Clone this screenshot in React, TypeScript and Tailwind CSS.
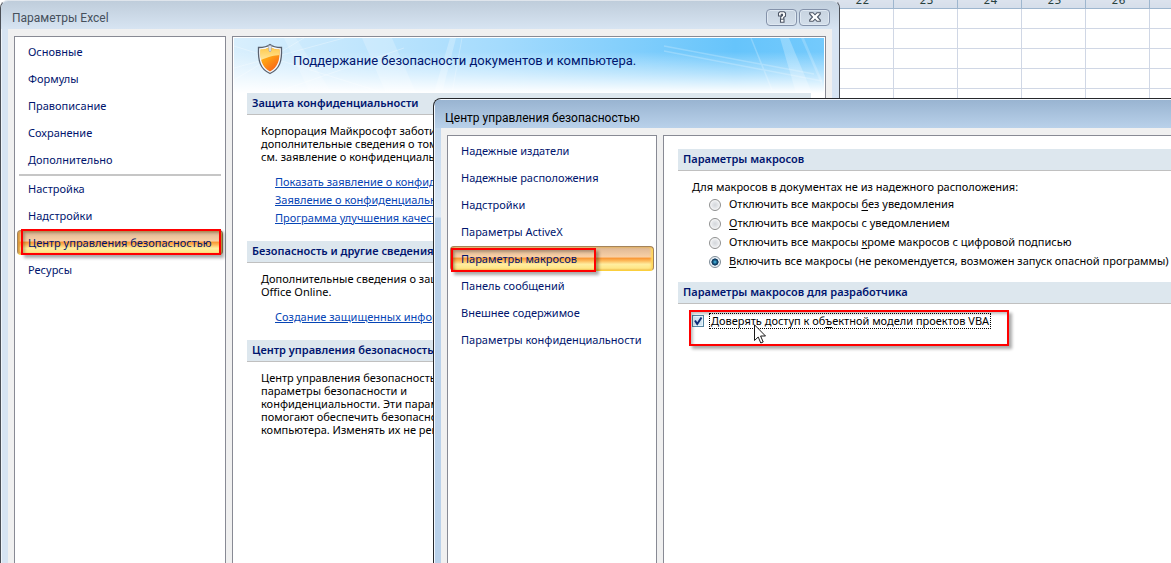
import type { ReactNode } from "react";

const columns = [22, 23, 24, 25, 26, 27];
const sheetRows = [1, 2, 3, 4, 5];

const radioClass =
  "m-0 size-3 shrink-0 appearance-none rounded-full border border-[#8e8f8f] bg-[radial-gradient(circle,#d3d6da_0%,#e6e8eb_45%,#f8f8f8_70%)] checked:border-[#7d8b96] checked:bg-[radial-gradient(circle,#4fc3f0_0%,#15587f_28%,#0b2f55_46%,#dce8f0_54%,#f4f8fb_70%)]";

function Sheet() {
  return (
    <div className="absolute inset-y-0 left-[829px] right-0 overflow-hidden bg-white">
      <table className="-mt-3 w-[385px] table-fixed border-collapse font-['DejaVu_Sans',sans-serif] text-[11px] leading-4 text-[#27413e]">
        <thead>
          <tr className="h-5">
            {columns.map((c) => (
              <th
                key={c}
                className="w-16 border border-[#9eb6ce] bg-[linear-gradient(#e4e9f1,#d5deea)] p-0 pl-0.5 pt-1 text-center font-normal leading-[15px]"
              >
                {c}
              </th>
            ))}
          </tr>
        </thead>
        <tbody>
          {sheetRows.map((r) => (
            <tr key={r} className="h-5">
              {columns.map((c) => (
                <td key={c} className="border border-[#d0d7e5] p-0" />
              ))}
            </tr>
          ))}
        </tbody>
      </table>
    </div>
  );
}

function NavItem({ label, selected, callout }: { label: string; selected?: boolean; callout?: string }) {
  return (
    <li className="relative">
      <button
        type="button"
        className={
          selected
            ? "mb-0.5 block h-[25px] w-full rounded-sm border border-[#a5835a] border-b-[#fbcf3c] bg-[linear-gradient(#dcb695_0%,#f8cfa5_42%,#fa9a3a_50%,#fdb95a_60%,#ffeea0_75%,#ffe37c_100%)] px-[10px] pt-0.5 text-left shadow-[inset_2px_0_2px_#d99a3c,inset_-2px_0_2px_#ffd65a]"
            : "block h-[27px] w-full px-[11px] text-left"
        }
      >
        {label}
      </button>
      {callout && (
        <span
          className={`pointer-events-none absolute border-2 border-[#ff0000] shadow-[3px_3px_3px_#00000055,inset_2px_2px_3px_#00000040] ${callout}`}
        />
      )}
    </li>
  );
}

function Section({ title, children }: { title: string; children: ReactNode }) {
  return (
    <section>
      <h2 className="h-[22px] border-b border-[#c0c0c0] bg-[#dde7ee] px-[5px] text-[11px] font-semibold leading-5 text-[#00156e]">
        {title}
      </h2>
      {children}
    </section>
  );
}

function DocLink({ children }: { children: ReactNode }) {
  return (
    <li>
      <a href="#" className="text-[#0645b5] underline">
        {children}
      </a>
    </li>
  );
}

function Shield() {
  return (
    <svg viewBox="0 0 28 32" className="h-8 w-7 shrink-0" aria-hidden="true">
      <defs>
        <linearGradient id="shield-top" x1="0" y1="0" x2="0" y2="1">
          <stop offset="0" stopColor="#ffc23a" />
          <stop offset="1" stopColor="#ffe9a0" />
        </linearGradient>
        <linearGradient id="shield-base" x1="0" y1="0" x2=".7" y2="1">
          <stop offset="0" stopColor="#ffd21c" />
          <stop offset="0.55" stopColor="#ff9d12" />
          <stop offset="1" stopColor="#f4511e" />
        </linearGradient>
        <clipPath id="shield-clip">
          <path d="M14 4 C11 6 8 6.500 4.500 6.500 C4 17 6 24 14 28.500 C22 24 24 17 23.500 6.500 C20 6.500 17 6 14 4Z" />
        </clipPath>
      </defs>
      <path
        d="M14 1.500 C11 4 7 4.500 2.500 4.500 C2 18 4 26 14 30.500 C24 26 26 18 25.500 4.500 C21 4.500 17 4 14 1.500Z"
        fill="#f5f7fa"
        stroke="#59616f"
        strokeWidth="1.300"
      />
      <g clipPath="url(#shield-clip)">
        <rect width="28" height="32" fill="url(#shield-base)" />
        <path d="M2 2H26V12C20 12 14 13 3 18Z" fill="url(#shield-top)" />
      </g>
      <path d="M12.500 2.500H15.500L15 8L14 9L13 8Z" fill="#e2e6ee" stroke="#8992a3" strokeWidth=".5" />
    </svg>
  );
}

function Banner() {
  return (
    <header className="relative m-px mb-0 h-[55px] overflow-hidden bg-[linear-gradient(90deg,#d9effd_0%,#a4dbfd_45%,#66c4fb_85%,#74cafc_100%)]">
      <svg viewBox="0 0 590 55" preserveAspectRatio="none" className="absolute inset-0 size-full" aria-hidden="true">
        <g fill="#ffffff">
          <path d="M50 0H62L98 55H76Z" opacity=".2" />
          <path d="M128 0H158L182 55H152Z" opacity=".22" />
          <path d="M216 0H222L208 55H200Z" opacity=".25" />
          <path d="M546 0H555L578 55H562Z" opacity=".25" />
          <path d="M567 0H570L588 42V48Z" opacity=".2" />
        </g>
        <g stroke="#ffffff" fill="none">
          <path d="M0 30L110 0M0 8L150 55M40 55L170 10M0 42L70 0" opacity=".3" />
          <path d="M430 8L580 36M430 13L588 43M517 0L538 52" strokeWidth="1.500" opacity=".22" />
          <path d="M228 0L218 55" opacity=".25" />
        </g>
      </svg>
      <div className="absolute inset-0 bg-[linear-gradient(#ffffff00_25%,#ffffff80_65%,#ffffff_100%)]" />
      <div className="relative flex items-center gap-2 pl-[22px] pt-[5px]">
        <Shield />
        <h1 className="pl-px pt-1 font-[Roboto,sans-serif] text-[13px] leading-4 text-[#00156e]">
          Поддержание безопасности документов и компьютера.
        </h1>
      </div>
    </header>
  );
}

const captionButton =
  "flex h-[17px] w-[31px] items-center justify-center rounded-sm border border-[#8492aa] bg-[linear-gradient(#c7d3e0,#d3deea)] shadow-[inset_0_0_0_1px_#dfe8f2]";

function OptionsWindow() {
  return (
    <div className="absolute inset-y-0 left-0 flex w-[840px] flex-col overflow-hidden rounded-t-lg border-x border-t border-x-[#4b4f56] border-t-[#dfe5ec] bg-[#d7e4f2] shadow-[inset_1px_1px_0_#eef4fa]">
      <div className="flex h-7 shrink-0 items-center justify-between bg-[linear-gradient(#bfcddb,#d7e4f2)] pl-[11px] pr-[9px] pt-1">
        <span className="pt-0.5 font-[Roboto,sans-serif] text-xs text-[#46505c]">Параметры Excel</span>
        <div className="flex gap-0.5">
          <button type="button" aria-label="Справка" className={captionButton}>
            <svg viewBox="0 0 10 12" className="h-3 w-2.5" aria-hidden="true">
              <path
                d="M1.500 5V2L3 .7H7L8.500 2V5.200L6.700 6.500V8H7V11.300H3.500V8L3.800 5.800L5.500 4.500V3.400H4.300V5Z"
                fill="#fff"
                stroke="#4d5666"
                strokeWidth="1.100"
              />
              <path d="M3.800 8.200H6.600" stroke="#4d5666" />
            </svg>
          </button>
          <button type="button" aria-label="Закрыть" className={captionButton}>
            <svg viewBox="0 0 12 10" className="h-2.5 w-3" aria-hidden="true">
              <path
                d="M.7 .7H4L6 2.800L8 .7H11.300V2L8.500 5L11.300 8V9.300H8L6 7.200L4 9.300H.7V8L3.500 5L.7 2Z"
                fill="#fff"
                stroke="#4d5666"
                strokeWidth="1.100"
              />
            </svg>
          </button>
        </div>
      </div>
      <div className="mx-[7px] flex grow gap-1.5 bg-[#f0f0f0] px-[6px] pt-[7px]">
        <nav className="w-[212px] shrink-0 border border-b-0 border-[#888a94] bg-white px-0.5 pt-0.5 text-[#00156e]">
          <ul>
            <NavItem label="Основные" />
            <NavItem label="Формулы" />
            <NavItem label="Правописание" />
            <NavItem label="Сохранение" />
            <NavItem label="Дополнительно" />
          </ul>
          <hr className="mx-0.5 border-t-2 border-[#c6c6c6]" />
          <ul>
            <NavItem label="Настройка" />
            <NavItem label="Надстройки" />
            <NavItem label="Центр управления безопасностью" selected callout="-top-px bottom-0 left-1 right-0.5" />
            <NavItem label="Ресурсы" />
          </ul>
        </nav>
        <main className="grow border border-b-0 border-[#888a94] bg-white">
          <Banner />
          <div className="px-[14px]">
            <Section title="Защита конфиденциальности">
              <div className="px-[14px] pb-[14px] pt-[9px] leading-[13px]">
                <p>
                  Корпорация Майкрософт заботи
                  <br />
                  дополнительные сведения о том,
                  <br />
                  см. заявление о конфиденциальн
                </p>
                <ul className="pl-[14px] pt-[10px] leading-[18px]">
                  <DocLink>Показать заявление о конфиде</DocLink>
                  <DocLink>Заявление о конфиденциальн</DocLink>
                  <DocLink>Программа улучшения качеств</DocLink>
                </ul>
              </div>
            </Section>
            <Section title="Безопасность и другие сведения">
              <div className="px-[14px] pb-[14px] pt-[9px] leading-[13px]">
                <p>
                  Дополнительные сведения о защи
                  <br />
                  Office Online.
                </p>
                <ul className="pl-[14px] pt-[10px] leading-[18px]">
                  <DocLink>Создание защищенных информ</DocLink>
                </ul>
              </div>
            </Section>
            <Section title="Центр управления безопасностью">
              <p className="px-[14px] pt-[9px] leading-[13px]">
                Центр управления безопасность
                <br />
                параметры безопасности и
                <br />
                конфиденциальности. Эти парам
                <br />
                помогают обеспечить безопасно
                <br />
                компьютера. Изменять их не рек
              </p>
            </Section>
          </div>
        </main>
      </div>
    </div>
  );
}

function MacroOption({ before, mark, after, checked }: { before: string; mark: string; after: string; checked?: boolean }) {
  return (
    <label className="flex h-[19px] items-center gap-2">
      <input type="radio" name="macros" defaultChecked={checked} className={radioClass} />
      <span className="whitespace-nowrap">
        {before}
        <span className="underline underline-offset-2">{mark}</span>
        {after}
      </span>
    </label>
  );
}

function TrustWindow() {
  return (
    <div className="absolute bottom-0 left-[433px] right-0 top-[98px] flex flex-col overflow-hidden rounded-tl-lg border-l border-t border-[#26282c] bg-[linear-gradient(#b9d1ea_0,#dce8f5_118px,#b9d1ea_119px)] shadow-[inset_1px_1px_0_#f4f9ff]">
      <div className="ml-px mt-px flex h-7 shrink-0 items-center bg-[linear-gradient(#99b4d1,#b9d1ea)] pl-[10px] pt-2 font-[Roboto,sans-serif] text-xs text-black">
        Центр управления безопасностью
      </div>
      <div className="ml-[7px] flex grow gap-1.5 bg-[#f0f0f0] pl-[6px] pt-[7px]">
        <nav className="w-[210px] shrink-0 border border-b-0 border-[#888a94] bg-white px-0.5 pt-0.5 text-[#00156e]">
          <ul>
            <NavItem label="Надежные издатели" />
            <NavItem label="Надежные расположения" />
            <NavItem label="Надстройки" />
            <NavItem label="Параметры ActiveX" />
            <NavItem label="Параметры макросов" selected callout="-bottom-px left-px top-0.5 w-[145px]" />
            <NavItem label="Панель сообщений" />
            <NavItem label="Внешнее содержимое" />
            <NavItem label="Параметры конфиденциальности" />
          </ul>
        </nav>
        <main className="grow overflow-hidden border-l border-t border-[#888a94] bg-white pl-[14px] pt-[13px]">
          <Section title="Параметры макросов">
            <fieldset className="px-[14px] pb-[11px] pt-2">
              <legend className="float-left h-4 leading-[15px]">
                Для макросов в документах не из надежного расположения:
              </legend>
              <div className="clear-both pl-[17px]">
                <MacroOption before="Отключить все макросы " mark="б" after="ез уведомления" />
                <MacroOption before="" mark="О" after="тключить все макросы с уведомлением" />
                <MacroOption before="Отключить все макросы " mark="к" after="роме макросов с цифровой подписью" />
                <MacroOption
                  before=""
                  mark="В"
                  after="ключить все макросы (не рекомендуется, возможен запуск опасной программы)"
                  checked
                />
              </div>
            </fieldset>
          </Section>
          <Section title="Параметры макросов для разработчика">
            <div className="relative flex pl-[14px] pt-[9px]">
              <label className="flex h-4 items-center gap-[5px]">
                <input type="checkbox" defaultChecked className="peer sr-only" />
                <svg viewBox="0 0 12 12" className="size-3 shrink-0" aria-hidden="true">
                  <rect x=".5" y=".5" width="11" height="11" fill="#e5f4fc" stroke="#5586a3" />
                  <rect x="2" y="2" width="8" height="8" fill="#cfe3ef" />
                  <path d="M3 5.500L5.200 9L9.500 2.500" fill="none" stroke="#0f2d78" strokeWidth="2" />
                </svg>
                <span className="whitespace-nowrap border border-dotted border-black px-px leading-[14px]">
                  Доверять доступ к об<span className="underline underline-offset-2">ъ</span>ектной модели проектов VBA
                </span>
              </label>
              <span className="pointer-events-none absolute left-[11px] top-[6px] h-9 w-80 border-2 border-[#ff0000] shadow-[3px_3px_3px_#00000055,inset_2px_2px_3px_#00000040]" />
              <svg viewBox="0 0 12 20" className="absolute left-[76px] top-[20px] h-5 w-3" aria-hidden="true">
                <path
                  d="M.5 .8V16.500L4.200 13L6.800 19L9.200 18L6.600 12H11.500Z"
                  fill="#fff"
                  stroke="#000"
                  strokeWidth=".9"
                />
              </svg>
            </div>
          </Section>
        </main>
      </div>
    </div>
  );
}

export default function App() {
  return (
    <div className="relative h-screen min-h-[480px] overflow-hidden bg-white font-['Noto_Sans',sans-serif] text-[11px] text-black">
      <Sheet />
      <OptionsWindow />
      <TrustWindow />
    </div>
  );
}
